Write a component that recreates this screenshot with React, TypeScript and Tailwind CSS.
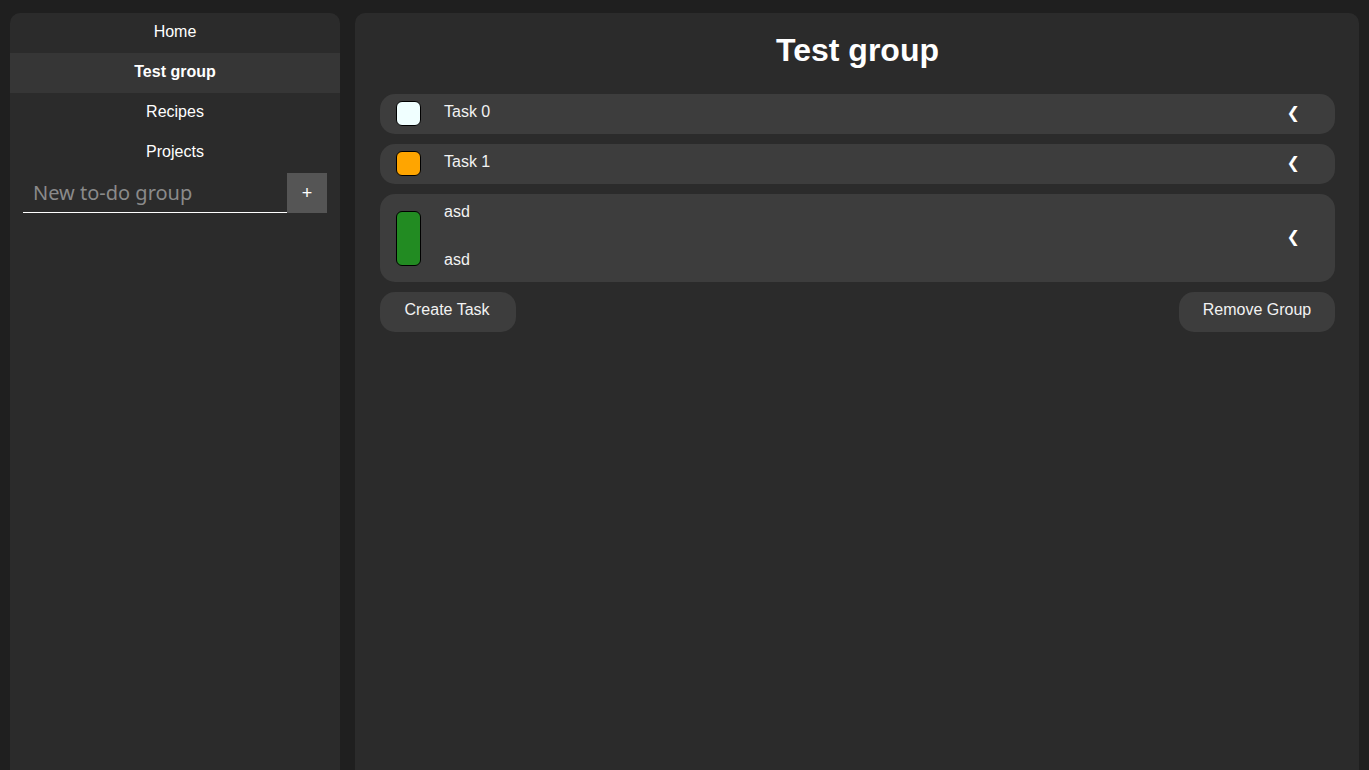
import { useState } from "react"

const groups = ["Home", "Test group", "Recipes", "Projects"]

function TaskRow({
  color,
  tall,
  title,
  desc,
}: {
  color: string
  tall?: boolean
  title: string
  desc?: string
}) {
  return (
    <div
      className={`flex items-center rounded-[15px] bg-[#3d3d3d] pl-4 pr-[35px] ${tall ? "h-[88px]" : "h-[40px]"}`}
    >
      <div
        className={`w-[25px] shrink-0 rounded-[6px] border border-black ${tall ? "h-[55px]" : "mb-[1px] h-[25px]"}`}
        style={{ backgroundColor: color }}
      />
      <div className="ml-[23px] flex flex-1 flex-col self-stretch pt-[9px] text-[16px] leading-[18px] text-[#f2f2f2]">
        <span>{title}</span>
        {desc && <span className="mt-[30px]">{desc}</span>}
      </div>
      <span className="mb-[3px] text-[16px] text-white" style={{ fontFamily: "'DejaVu Sans', sans-serif" }}>
        ❮
      </span>
    </div>
  )
}

export default function App() {
  const [name, setName] = useState("")
  return (
    <div
      className="flex h-[770px] gap-[15px] overflow-hidden bg-[#1f1f1f] pl-[10px] pr-[10px] pt-[13px]"
      style={{ fontFamily: "'Liberation Sans', Arial, sans-serif" }}
    >
      <aside className="w-[330px] shrink-0 rounded-t-[10px] bg-[#2b2b2b]">
        {groups.map((g) => (
          <div
            key={g}
            className={`flex h-[40px] items-center justify-center pb-[2px] text-[16px] text-white ${
              g === "Test group" ? "bg-[#363636] font-bold" : ""
            }`}
          >
            {g}
          </div>
        ))}
        <div className="flex px-[13px]">
          <input
            value={name}
            onChange={(e) => setName(e.target.value)}
            placeholder="New to-do group"
            className="h-[40px] w-0 min-w-0 flex-1 border-b border-white bg-transparent px-[10px] text-[20px] text-white outline-none placeholder:text-[#8a8a8a]"
            style={{ fontFamily: "'Noto Sans', 'DejaVu Sans', sans-serif" }}
          />
          <button className="h-[40px] w-[40px] shrink-0 bg-[#555555] text-[18px] text-white">+</button>
        </div>
      </aside>
      <main className="flex-1 rounded-t-[10px] bg-[#2b2b2b] pl-[25px] pr-[24px]">
        <h1 className="pt-[18px] pb-[25px] text-center text-[32px] font-bold leading-[38px] text-white">
          Test group
        </h1>
        <div className="flex flex-col gap-[10px]">
          <TaskRow color="#f0ffff" title="Task 0" />
          <TaskRow color="#ffa500" title="Task 1" />
          <TaskRow color="#228b22" tall title="asd" desc="asd" />
          <div className="flex justify-between">
            <button className="h-[40px] w-[136px] rounded-[15px] bg-[#3d3d3d] pr-[2px] pb-[4px] text-[16px] text-[#f2f2f2]">
              Create Task
            </button>
            <button className="h-[40px] w-[156px] rounded-[15px] bg-[#3d3d3d] pb-[4px] text-[16px] text-[#f2f2f2]">
              Remove Group
            </button>
          </div>
        </div>
      </main>
    </div>
  )
}
